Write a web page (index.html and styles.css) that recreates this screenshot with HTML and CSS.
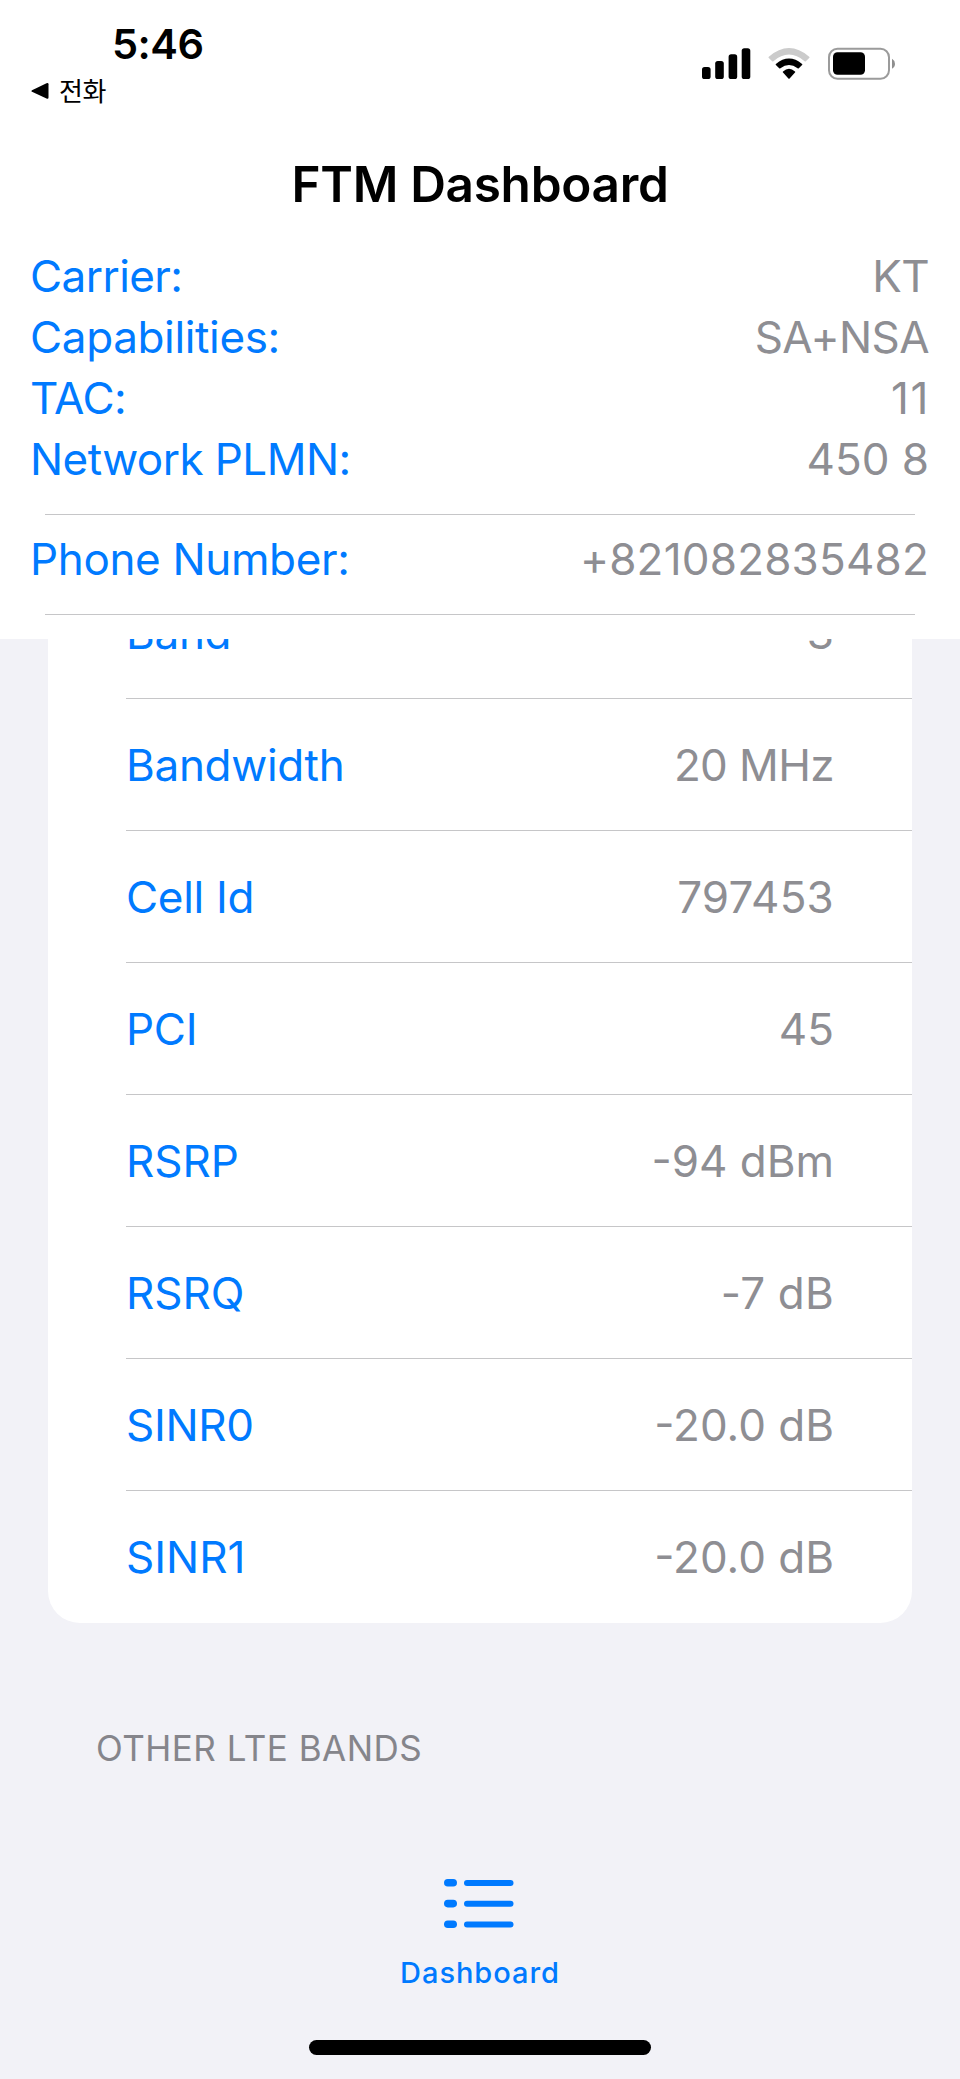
FILE: index.html
```html
<!DOCTYPE html>
<html lang="ko">
<head>
<meta charset="utf-8">
<title>FTM Dashboard</title>
<link rel="stylesheet" href="styles.css">
</head>
<body>
<div class="screen">
  <header class="header">
    <div class="status">
      <div class="status-left">
        <div class="clock">5:46</div>
        <div class="back">
          <svg width="18" height="18" viewBox="0 0 18 18"><path d="M1 8.2 15.5 1.2Q17.500 .4 17.500 2.2V15.4Q17.500 17.200 15.500 16.400L1 9.8Q-.2 9 1 8.2Z"/></svg>
          <span>전화</span>
        </div>
      </div>
      <svg class="status-icons" width="196" height="34" viewBox="701 47 196 34">
        <rect x="702" y="67" width="8.6" height="12" rx="2.6"/>
        <rect x="715.2" y="61" width="8.6" height="18" rx="2.6"/>
        <rect x="728.6" y="54.3" width="8.6" height="24.7" rx="2.6"/>
        <rect x="741.7" y="48.2" width="8.6" height="30.8" rx="2.6"/>
        <path fill="#cbcbcb" d="M768.8 56.7Q789 39.3 809.2 56.7 809.8 57.4 809.2 58L805.8 61.2Q805.2 61.7 804.6 61.2 789 48 773.4 61.2 772.8 61.7 772.2 61.2L768.8 58Q768.2 57.4 768.8 56.7Z"/>
        <path d="M775.9 63.9Q789 53.3 802.1 63.9 802.7 64.5 802.1 65.1L798.8 68.3Q798.2 68.9 797.6 68.3 789 61.5 780.4 68.3 779.8 68.9 779.2 68.3L775.9 65.1Q775.3 64.5 775.9 63.9Z"/>
        <path d="M783 71.4Q789 66.2 795 71.4 795.6 72 795 72.6L789.6 78.4Q789 79 788.4 78.4L783 72.6Q782.4 72 783 71.4Z"/>
        <rect x="829" y="48.8" width="60" height="30" rx="8.5" fill="none" stroke="#9b9b9b" stroke-width="2"/>
        <rect x="833" y="52.3" width="32" height="22.4" rx="4.5"/>
        <path fill="#8f8f8f" d="M892 58.7Q895 60.500 895 63.700 895 67 892 68.700Z"/>
      </svg>
    </div>
    <h1 class="title">FTM Dashboard</h1>
    <dl class="summary">
      <div class="pair"><dt>Carrier:</dt><dd class="tight">KT</dd></div>
      <div class="pair"><dt class="wide">Capabilities:</dt><dd class="tight">SA+NSA</dd></div>
      <div class="pair"><dt>TAC:</dt><dd class="loose">11</dd></div>
      <div class="pair"><dt>Network PLMN:</dt><dd>450 8</dd></div>
    </dl>
    <dl class="summary phone">
      <div class="pair"><dt class="wide">Phone Number:</dt><dd class="digits">+821082835482</dd></div>
    </dl>
  </header>
  <main class="content">
    <dl class="card">
      <div class="row"><dt>Band</dt><dd>3</dd></div>
      <div class="row"><dt>Bandwidth</dt><dd class="tight">20 MHz</dd></div>
      <div class="row"><dt>Cell Id</dt><dd class="digits">797453</dd></div>
      <div class="row"><dt>PCI</dt><dd>45</dd></div>
      <div class="row"><dt class="plain">RSRP</dt><dd>-94 dBm</dd></div>
      <div class="row"><dt class="plain">RSRQ</dt><dd class="digits">-7 dB</dd></div>
      <div class="row"><dt>SINR0</dt><dd>-20.0 dB</dd></div>
      <div class="row"><dt class="plain">SINR1</dt><dd>-20.0 dB</dd></div>
    </dl>
    <h2 class="section">OTHER LTE BANDS</h2>
  </main>
  <nav class="tabbar">
    <div class="tab">
      <svg class="list-icon" width="70" height="50" viewBox="0 0 70 50" fill="#007aff">
        <rect x="0" y="0" width="13" height="7.600" rx="3.8"/><rect x="20" y="1" width="49.500" height="6" rx="3"/>
        <rect x="0" y="20.800" width="13" height="7.600" rx="3.8"/><rect x="20" y="21.700" width="49.500" height="6" rx="3"/>
        <rect x="0" y="41.500" width="13" height="7.600" rx="3.8"/><rect x="20" y="42.400" width="49.500" height="6" rx="3"/>
      </svg>
      <span>Dashboard</span>
    </div>
    <div class="home"></div>
  </nav>
</div>
</body>
</html>
```
FILE: styles.css
```css
* { box-sizing: border-box; }
body, h1, h2, dl, dd { margin: 0; }
body { font-family: Inter, "Noto Sans CJK KR", sans-serif; background: #f2f2f7; }
.screen { width: 960px; height: 2079px; display: flex; flex-direction: column; overflow: hidden; }
.header { height: 639px; flex: none; background: #fff; position: relative; z-index: 1; }
.status { height: 150px; display: flex; justify-content: space-between; padding: 20px 63px 0 31px; }
.status-left { display: flex; flex-direction: column; }
.clock { padding-left: 81px; font-size: 41.5px; line-height: 48px; font-weight: 600; letter-spacing: -.5px; }
.back { display: flex; align-items: center; gap: 10px; height: 46px; font: 400 26px/44px "Noto Sans CJK KR", sans-serif; letter-spacing: -.5px; }
.back span { height: 46px; }
.status-icons { margin-top: 27px; }
.title { font-size: 49.5px; line-height: 68px; font-weight: 600; text-align: center; letter-spacing: -.3px; }
.summary { padding: 0 31px 0 30px; margin-top: 28px; line-height: 61px; font-size: 44px; }
.summary::after { content: ""; display: block; height: 1px; margin: 24px 14px 0 15px; background: #c6c6c8; }
.summary.phone { margin-top: 14px; }
.pair, .row { display: flex; justify-content: space-between; align-items: center; }
dt { color: #007aff; letter-spacing: -.3px; }
dd { color: #8e8e93; }
.pair dt { letter-spacing: -.55px; }
.pair .wide { letter-spacing: -.35px; }
.plain { letter-spacing: 0; }
.tight { letter-spacing: -.6px; }
.loose { letter-spacing: 1.6px; margin-right: -1px; }
.digits { letter-spacing: .2px; }
.content { flex: 1; min-height: 0; overflow: hidden; }
.card { margin: -72px 48px 0; background: #fff; border-radius: 32px; padding-left: 78px; font-size: 44px; }
.row { height: 132px; padding: 0 78px 0 0; border-bottom: 1px solid #c6c6c8; }
.row:last-child { border-bottom: 0; }
.section { margin: 103px 96px 0; font-size: 35px; line-height: 44px; font-weight: 400; color: #85858b; letter-spacing: .5px; }
.tabbar { height: 220px; flex: none; display: flex; flex-direction: column; align-items: center; justify-content: space-between; padding: 20px 0 24px; }
.tab { display: flex; flex-direction: column; align-items: center; gap: 26px; color: #007aff; font-size: 29px; line-height: 36px; font-weight: 500; letter-spacing: .95px; }
.list-icon { margin-right: 2px; }
.home { width: 342px; height: 15px; border-radius: 8px; background: #000; }
```
